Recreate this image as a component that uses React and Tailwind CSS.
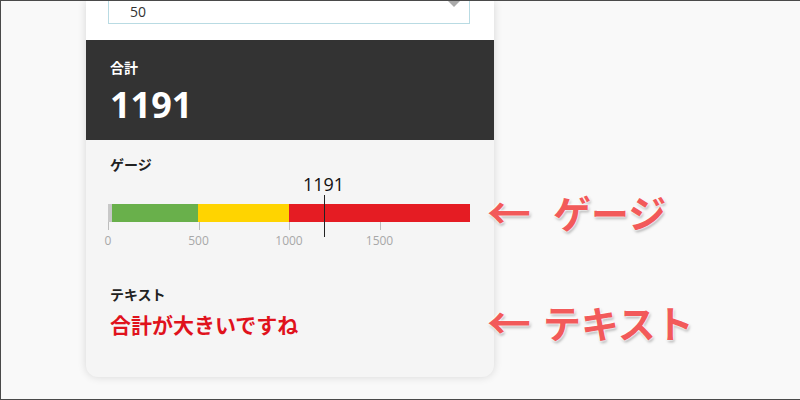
const font = { fontFamily: '"Open Sans", "Noto Sans CJK JP", sans-serif' };

const ticks = [0, 500, 1000, 1500];
const MAX = 2000;
const BAR_W = 362;
const total = 1191;

const Gauge = () => {
    const markerLeft = (total / MAX) * BAR_W;
    return (
        <div className="relative w-[362px] pt-[29px]">
            <div className="flex h-[18px] w-[362px]">
                <div className="w-[4px] bg-[#c8c8c8]"></div>
                <div className="w-[86px] bg-[#69b04b]"></div>
                <div className="w-[91px] bg-[#ffd400]"></div>
                <div className="flex-1 bg-[#e51c23]"></div>
            </div>
            <div className="grid grid-cols-4 w-[362px]">
                {ticks.map((t) => (
                    <div key={t} className="flex flex-col items-start">
                        <div className="w-px h-[8px] bg-[#bdbdbd]"></div>
                        <div className="mt-[4px] -translate-x-1/2 text-[12px] leading-[14px] text-[#a8a8a8]">{t}</div>
                    </div>
                ))}
            </div>
            <div className="absolute top-[20px] w-px h-[42px] bg-[#222]" style={{ left: markerLeft }}></div>
            <div className="absolute -top-[2px] -translate-x-1/2 text-[18px] leading-[22px] text-[#111]" style={{ left: markerLeft }}>{total}</div>
        </div>
    );
};

const Note = ({ label, gap, className }) => (
    <div
        className={`absolute flex items-center font-bold text-[#f25a5a] leading-none ${gap} ${className}`}
        style={{ textShadow: '0 0 2px #fff, 0 0 2px #fff, 0 0 3px #fff, 1px 2px 3px rgba(0,0,0,0.35)' }}
    >
        <span className="text-[44px] leading-[40px]">←</span>
        <span className="text-[38px]">{label}</span>
    </div>
);

export default function App() {
    return (
        <div className="relative w-[800px] h-[400px] overflow-hidden bg-[#f9f9f9] border-t border-l border-b border-[#4a4a4a]" style={font}>
            <div className="ml-[85px] w-[408px] rounded-b-[12px] bg-[#f5f5f5] shadow-[0_0_8px_rgba(0,0,0,0.14)] overflow-hidden">
                <div className="h-[39px] bg-white px-[22px]">
                    <div className="relative h-[23px] w-[362px] border-x border-b border-[#b9dbe3] bg-white flex items-center pl-[21px]">
                        <span className="text-[14px] leading-[16px] text-[#333]">50</span>
                        <div className="absolute right-[9px] top-0 w-0 h-0 border-l-[6px] border-r-[6px] border-t-[6px] border-l-transparent border-r-transparent border-t-[#aaa]"></div>
                    </div>
                </div>
                <div className="h-[100px] bg-[#333333] px-[24px] pt-[18px]">
                    <div className="text-[14px] leading-[20px] font-bold text-white">合計</div>
                    <div className="mt-[5px] text-[36px] leading-[44px] font-bold text-white">1191</div>
                </div>
                <div className="px-[22px] pt-[15px] pb-[38px]">
                    <div className="pl-[2px] text-[14px] leading-[20px] font-bold text-[#222]">ゲージ</div>
                    <Gauge />
                    <div className="mt-[37px] pl-[2px] text-[14px] leading-[20px] font-bold text-[#222]">テキスト</div>
                    <div className="mt-[6px] pl-[2px] text-[21px] leading-[28px] font-bold text-[#e0121c]">合計が大きいですね</div>
                </div>
            </div>
            <Note label="ゲージ" gap="gap-[22px]" className="left-[486px] top-[192px]" />
            <Note label="テキスト" gap="gap-[12px]" className="left-[486px] top-[302px]" />
        </div>
    );
}
